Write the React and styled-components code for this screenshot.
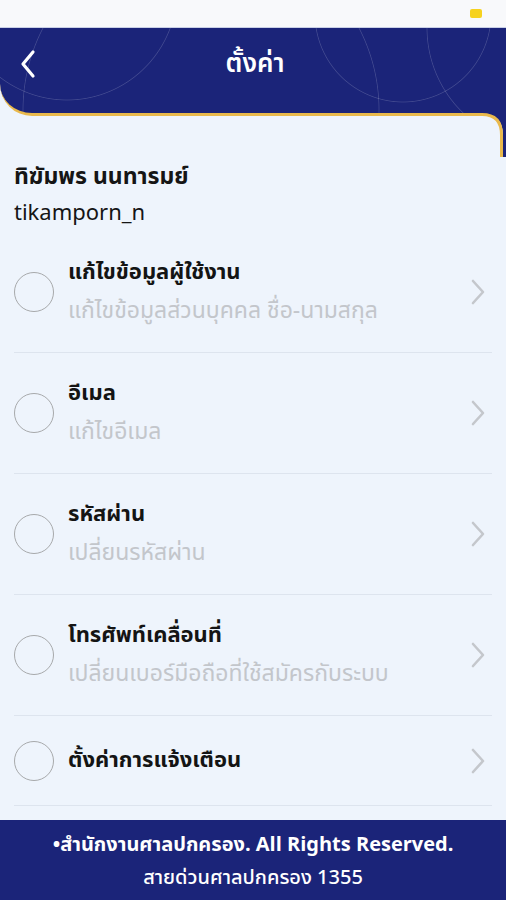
import React from "react";
import styled, { createGlobalStyle } from "styled-components";

const NAVY = "#1b2479";
const GOLD = "#e9b94c";

const items = [
  { title: "แก้ไขข้อมูลผู้ใช้งาน", sub: "แก้ไขข้อมูลส่วนบุคคล ชื่อ-นามสกุล" },
  { title: "อีเมล", sub: "แก้ไขอีเมล" },
  { title: "รหัสผ่าน", sub: "เปลี่ยนรหัสผ่าน" },
  { title: "โทรศัพท์เคลื่อนที่", sub: "เปลี่ยนเบอร์มือถือที่ใช้สมัครกับระบบ" },
  { title: "ตั้งค่าการแจ้งเตือน" },
];

function App() {
  return (
    <Page>
      <GlobalStyle />
      <StatusBar>
        <Battery />
      </StatusBar>
      <Header>
        <BackButton aria-label="back">
          <svg width="20" height="30" viewBox="0 0 20 30">
            <path d="M15 3 L5 15 L15 27" fill="none" stroke="#fff" strokeWidth="3.2" strokeLinecap="round" strokeLinejoin="round" />
          </svg>
        </BackButton>
        <Title>ตั้งค่า</Title>
        <Spacer />
      </Header>
      <CornerRow>
        <svg width="24" height="44" viewBox="0 0 24 44">
          <path d="M0 0 H24 V44 H21 V22 Q21 1.5 0 1.5 Z" fill={NAVY} />
          <path d="M0 1.5 Q19.5 1.5 19.5 22 V44" fill="none" stroke={GOLD} strokeWidth="3" />
        </svg>
      </CornerRow>
      <Body>
        <Profile>
          <Name>ทิฆัมพร นนทารมย์</Name>
          <Username>tikamporn_n</Username>
        </Profile>
        <List>
          {items.map((it) => (
            <Row key={it.title} $single={!it.sub}>
              <Circle />
              <Texts>
                <RowTitle>{it.title}</RowTitle>
                {it.sub && <RowSub>{it.sub}</RowSub>}
              </Texts>
              <svg width="16" height="28" viewBox="0 0 16 28">
                <path d="M3 3 L13 14 L3 25" fill="none" stroke="#c4c7cc" strokeWidth="2.6" strokeLinecap="round" strokeLinejoin="round" />
              </svg>
            </Row>
          ))}
        </List>
      </Body>
      <Footer>
        <FooterLine $bold>•สำนักงานศาลปกครอง. All Rights Reserved.</FooterLine>
        <FooterLine>สายด่วนศาลปกครอง 1355</FooterLine>
      </Footer>
    </Page>
  );
}

const GlobalStyle = createGlobalStyle`
  html, body { margin: 0; padding: 0; }
  body {
    background: #eef4fc;
    font-family: "Noto Sans Thai", "Noto Sans", "Open Sans", sans-serif;
  }
`;

const ring = (x, y, r) =>
  `radial-gradient(circle ${r + 1}px at ${x}px ${y}px, transparent ${r - 0.8}px, rgba(255,255,255,0.16) ${r}px, transparent ${r + 0.8}px)`;

const Page = styled.div`
  width: 506px;
  height: 900px;
  display: flex;
  flex-direction: column;
  background: #eef4fc;
  overflow: hidden;
`;

const StatusBar = styled.div`
  height: 27px;
  background: #f8f9fb;
  border-bottom: 1px solid #c9d0e6;
  display: flex;
  justify-content: flex-end;
  align-items: center;
  padding-right: 24px;
`;

const Battery = styled.div`
  width: 12px;
  height: 9px;
  border-radius: 2px;
  background: #f6d21e;
`;

const Header = styled.div`
  height: 88px;
  box-sizing: border-box;
  background-color: ${NAVY};
  background-image: ${ring(67, -38, 110)}, ${ring(201, 82, 178)},
    ${ring(403, -14, 88)}, ${ring(545, 0, 118)};
  border-bottom: 3px solid ${GOLD};
  border-bottom-left-radius: 32px;
  display: flex;
  align-items: flex-start;
  padding: 17px 14px 0 14px;
`;

const BackButton = styled.div`
  width: 40px;
  height: 38px;
  display: flex;
  align-items: center;
  justify-content: flex-start;
  padding-left: 4px;
`;

const Title = styled.div`
  flex: 1;
  text-align: center;
  color: #fff;
  font-size: 26px;
  font-weight: 600;
  line-height: 38px;
`;

const Spacer = styled.div`
  width: 40px;
`;

const CornerRow = styled.div`
  height: 0;
  display: flex;
  justify-content: flex-end;
  margin-top: -3px;
  overflow: visible;
  position: relative;
  z-index: 1;
`;

const Body = styled.div`
  flex: 1;
  padding: 0 14px;
`;

const Profile = styled.div`
  padding-top: 47px;
  display: flex;
  flex-direction: column;
  gap: 4px;
`;

const Name = styled.div`
  font-size: 23px;
  font-weight: 700;
  color: #151515;
  line-height: 34px;
`;

const Username = styled.div`
  font-size: 22px;
  color: #151515;
  line-height: 32px;
`;

const List = styled.div`
  margin-top: 2px;
  display: flex;
  flex-direction: column;
`;

const Row = styled.div`
  height: ${(p) => (p.$single ? 89 : 120)}px;
  border-bottom: 1px solid #dde4ee;
  display: flex;
  align-items: center;
  gap: 14px;
  padding-right: 6px;
`;

const Circle = styled.div`
  width: 38px;
  height: 38px;
  border-radius: 50%;
  border: 1.5px solid #a7a9ab;
  flex-shrink: 0;
`;

const Texts = styled.div`
  flex: 1;
  display: flex;
  flex-direction: column;
  gap: 4px;
`;

const RowTitle = styled.div`
  font-size: 22px;
  font-weight: 700;
  color: #141414;
  line-height: 34px;
`;

const RowSub = styled.div`
  font-size: 23px;
  color: #c3c6cb;
  line-height: 34px;
`;

const Footer = styled.div`
  height: 80px;
  box-sizing: border-box;
  padding-top: 4px;
  background: ${NAVY};
  display: flex;
  flex-direction: column;
  align-items: center;
  justify-content: center;
  gap: 2px;
`;

const FooterLine = styled.div`
  color: #fff;
  font-size: 20px;
  font-weight: ${(p) => (p.$bold ? 700 : 500)};
  line-height: 31px;
`;

export default App;
